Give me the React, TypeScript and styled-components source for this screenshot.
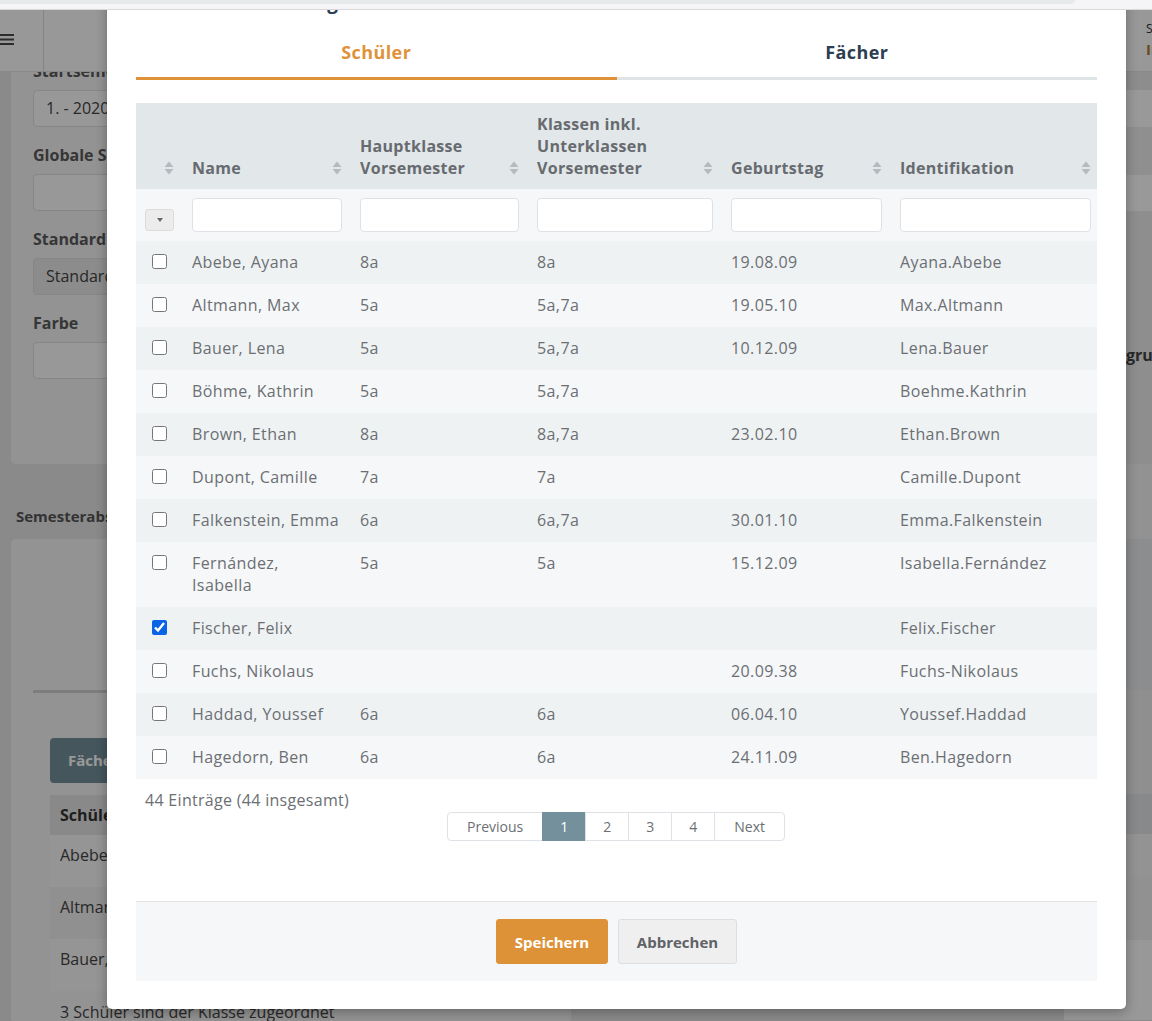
import React from 'react';
import styled, { createGlobalStyle } from 'styled-components';

const colors = {
  orange: '#dd9238',
  navy: '#2c3e50',
  text: '#6b6f74',
  head: '#676b70',
  headBg: '#e2e7e9',
  filterBg: '#f6f7f8',
  rowOdd: '#eff2f3',
  rowEven: '#f6f7f8',
  border: '#dee2e6',
  slate: '#74909c',
};

const font = `'Open Sans', 'Liberation Sans', sans-serif`;

const GlobalStyle = createGlobalStyle`
  html, body {
    margin: 0;
    padding: 0;
  }
  body {
    font-family: ${font};
    background: #e6e6e6;
    overflow: hidden;
  }
  * {
    box-sizing: border-box;
  }
`;

interface Student {
  name: string;
  main: string;
  classes: string;
  birthday: string;
  ident: string;
  checked?: boolean;
}

const students: Student[] = [
  { name: 'Abebe, Ayana', main: '8a', classes: '8a', birthday: '19.08.09', ident: 'Ayana.Abebe' },
  { name: 'Altmann, Max', main: '5a', classes: '5a,7a', birthday: '19.05.10', ident: 'Max.Altmann' },
  { name: 'Bauer, Lena', main: '5a', classes: '5a,7a', birthday: '10.12.09', ident: 'Lena.Bauer' },
  { name: 'Böhme, Kathrin', main: '5a', classes: '5a,7a', birthday: '', ident: 'Boehme.Kathrin' },
  { name: 'Brown, Ethan', main: '8a', classes: '8a,7a', birthday: '23.02.10', ident: 'Ethan.Brown' },
  { name: 'Dupont, Camille', main: '7a', classes: '7a', birthday: '', ident: 'Camille.Dupont' },
  { name: 'Falkenstein, Emma', main: '6a', classes: '6a,7a', birthday: '30.01.10', ident: 'Emma.Falkenstein' },
  { name: 'Fernández,\nIsabella', main: '5a', classes: '5a', birthday: '15.12.09', ident: 'Isabella.Fernández' },
  { name: 'Fischer, Felix', main: '', classes: '', birthday: '', ident: 'Felix.Fischer', checked: true },
  { name: 'Fuchs, Nikolaus', main: '', classes: '', birthday: '20.09.38', ident: 'Fuchs-Nikolaus' },
  { name: 'Haddad, Youssef', main: '6a', classes: '6a', birthday: '06.04.10', ident: 'Youssef.Haddad' },
  { name: 'Hagedorn, Ben', main: '6a', classes: '6a', birthday: '24.11.09', ident: 'Ben.Hagedorn' },
];

const columns: { width: number; label: string[] }[] = [
  { width: 44, label: [] },
  { width: 168, label: ['Name'] },
  { width: 177, label: ['Hauptklasse', 'Vorsemester'] },
  { width: 194, label: ['Klassen inkl.', 'Unterklassen', 'Vorsemester'] },
  { width: 169, label: ['Geburtstag'] },
  { width: 209, label: ['Identifikation'] },
];

const SortIcon = () => (
  <svg width="10" height="14" viewBox="0 0 10 14">
    <path d="M0.5 6 L5 0.5 L9.5 6 Z" fill="#b6babe" />
    <path d="M0.5 8 L5 13.5 L9.5 8 Z" fill="#b6babe" />
  </svg>
);

const MenuIcon = () => (
  <svg width="14" height="11" viewBox="0 0 14 11">
    <rect x="0" y="0" width="14" height="2" fill="#4a4a4a" />
    <rect x="0" y="4.5" width="14" height="2" fill="#4a4a4a" />
    <rect x="0" y="9" width="14" height="2" fill="#4a4a4a" />
  </svg>
);

export default function App() {
  return (
    <Screen>
      <GlobalStyle />
      <TopStrip>
        <TopStripBar />
      </TopStrip>
      <Stage>
        <Navbar>
          <NavToggle>
            <MenuIcon />
          </NavToggle>
          <NavUser>
            <NavUserSmall>Schule</NavUserSmall>
            <NavUserName>Info</NavUserName>
          </NavUser>
        </Navbar>
        <BgContent>
          <BgMain>
            <FormCard>
              <FieldLabel>Startsemester</FieldLabel>
              <FieldBox>1. - 2020</FieldBox>
              <FieldLabel>Globale Sichtbarkeit</FieldLabel>
              <FieldBox />
              <FieldLabel>Standardraum</FieldLabel>
              <FieldBox $muted>Standardraum</FieldBox>
              <FieldLabel>Farbe</FieldLabel>
              <FieldBox />
            </FormCard>
            <SectionTitle>Semesterabschluss</SectionTitle>
            <ListCard>
              <CardRule />
              <ListInner>
                <SlateButton>Fächer zuordnen</SlateButton>
                <BgTable>
                  <BgHeadRow>Schüler</BgHeadRow>
                  <BgRow>Abebe, Ayana</BgRow>
                  <BgRow $alt>Altmann, Max</BgRow>
                  <BgRow>Bauer, Lena</BgRow>
                </BgTable>
                <BgNote>3 Schüler sind der Klasse zugeordnet</BgNote>
              </ListInner>
            </ListCard>
          </BgMain>
          <BgSide>
            <SideBand $h={18} $bg="#ececec" />
            <SideBand $h={37} $bg="#ffffff" />
            <SideBand $h={48} $bg="#eeeeee" />
            <SideBand $h={36} $bg="#ffffff" />
            <SideGroup>
              <SideLabel>Klassengruppen</SideLabel>
            </SideGroup>
            <SideBand $h={75} $bg="#f4f4f4" />
            <SideBand $h={151} $bg="#eaeced" />
            <SideBand $h={104} $bg="#eeeff0" />
            <SideBand $h={40} $bg="#e1e5e7" />
            <SideBand $h={42} $bg="#f6f6f6" />
            <SideBand $h={64} $bg="#f2f2f2" />
            <SideBand $h={80} $bg="#fdfdfd" />
          </BgSide>
        </BgContent>
        <Backdrop />
        <Modal>
          <ModalTitle>Klassenzuordnung</ModalTitle>
          <Tabs>
            <Tab $active>Schüler</Tab>
            <Tab>Fächer</Tab>
          </Tabs>
          <Table>
            <colgroup>
              {columns.map((c, i) => (
                <col key={i} style={{ width: c.width }} />
              ))}
            </colgroup>
            <thead>
              <tr>
                {columns.map((c, i) => (
                  <HeadCell key={i}>
                    <HeadInner>
                      <span>
                        {c.label.map((l, j) => (
                          <HeadLine key={j}>{l}</HeadLine>
                        ))}
                      </span>
                      <SortWrap>
                        <SortIcon />
                      </SortWrap>
                    </HeadInner>
                  </HeadCell>
                ))}
              </tr>
              <tr>
                <FilterCell $first>
                  <FilterToggle>
                    <Caret />
                  </FilterToggle>
                </FilterCell>
                {columns.slice(1).map((_, i) => (
                  <FilterCell key={i}>
                    <FilterInput />
                  </FilterCell>
                ))}
              </tr>
            </thead>
            <tbody>
              {students.map((s, i) => (
                <BodyRow key={s.ident} $odd={i % 2 === 0}>
                  <CheckCell>
                    <Check type="checkbox" defaultChecked={s.checked} />
                  </CheckCell>
                  <Cell>{s.name}</Cell>
                  <Cell>{s.main}</Cell>
                  <Cell>{s.classes}</Cell>
                  <Cell>{s.birthday}</Cell>
                  <Cell>{s.ident}</Cell>
                </BodyRow>
              ))}
            </tbody>
          </Table>
          <TableInfo>44 Einträge (44 insgesamt)</TableInfo>
          <Pagination>
            <PageItem $wide>Previous</PageItem>
            <PageItem $num $active>1</PageItem>
            <PageItem $num>2</PageItem>
            <PageItem $num>3</PageItem>
            <PageItem $num>4</PageItem>
            <PageItem $wide>Next</PageItem>
          </Pagination>
          <ModalFooter>
            <PrimaryButton>Speichern</PrimaryButton>
            <SecondaryButton>Abbrechen</SecondaryButton>
          </ModalFooter>
        </Modal>
      </Stage>
    </Screen>
  );
}

/* ---------- page frame ---------- */

const Screen = styled('div')`
  width: 1152px;
  height: 1021px;
  overflow: hidden;
`;

const TopStrip = styled('div')`
  height: 10px;
  background: #f5f5f7;
  border-bottom: 1px solid #d9d9db;
`;

const TopStripBar = styled('div')`
  width: 1075px;
  height: 4px;
  background: #e8e9eb;
  border-bottom-right-radius: 4px;
`;

const Stage = styled('div')`
  position: relative;
  height: 1011px;
  overflow: hidden;
  background: #e6e6e6;
`;

/* ---------- background page (behind the backdrop) ---------- */

const Navbar = styled('header')`
  position: absolute;
  top: 0;
  left: 0;
  right: 0;
  z-index: 1;
  height: 62px;
  display: flex;
  align-items: stretch;
  background: #fdfdfd;
  border-bottom: 1px solid #e3e3e3;
`;

const NavToggle = styled('div')`
  width: 44px;
  display: flex;
  align-items: center;
  border-right: 1px solid #dcdcdc;
  padding-bottom: 2px;
`;

const NavUser = styled('div')`
  margin-left: auto;
  width: 6px;
  padding-top: 11px;
  white-space: nowrap;
`;

const NavUserSmall = styled('div')`
  font-size: 12px;
  line-height: 16px;
  color: #333;
`;

const NavUserName = styled('div')`
  font-size: 15px;
  font-weight: 700;
  line-height: 24px;
  color: #b07a3a;
`;

const BgContent = styled('div')`
  display: flex;
  padding-left: 11px;
`;

const BgMain = styled('div')`
  width: 560px;
  flex: none;
`;

const FormCard = styled('section')`
  margin-top: 30px;
  background: #f5f5f5;
  border-radius: 5px;
  padding: 20px 22px 85px;
`;

const FieldLabel = styled('div')`
  font-size: 16px;
  line-height: 22px;
  font-weight: 700;
  color: #5a5a5a;
  margin-bottom: 8px;
`;

const FieldBox = styled('div')<{ $muted?: boolean }>`
  height: 37px;
  margin-bottom: 17px;
  border: 1px solid #e0e0e0;
  border-radius: 4px;
  background: ${(p) => (p.$muted ? '#e9e9e9' : '#fefefe')};
  padding: 0 12px;
  font-size: 16px;
  line-height: 35px;
  color: #444;
  &:last-child {
    margin-bottom: 0;
  }
`;

const SectionTitle = styled('h3')`
  margin: 41px 0 12px 5px;
  font-size: 15px;
  line-height: 22px;
  font-weight: 700;
  color: #555;
`;

const ListCard = styled('section')`
  background: #f5f5f5;
  border-radius: 5px;
  padding: 151px 22px 0;
`;

const CardRule = styled('div')`
  height: 3px;
  background: #d0d0d0;
`;

const ListInner = styled('div')`
  padding: 45px 0 0 17px;
`;

const SlateButton = styled('div')`
  display: inline-block;
  height: 45px;
  padding: 0 18px;
  border-radius: 4px;
  background: ${colors.slate};
  color: #fff;
  font-weight: 700;
  font-size: 15px;
  line-height: 45px;
`;

const BgTable = styled('div')`
  margin-top: 12px;
`;

const BgHeadRow = styled('div')`
  height: 40px;
  padding: 0 10px;
  background: #e5e5e5;
  font-weight: 700;
  font-size: 16px;
  line-height: 40px;
  color: #333;
`;

const BgRow = styled('div')<{ $alt?: boolean }>`
  height: 52px;
  padding: 9px 10px 0;
  background: ${(p) => (p.$alt ? '#f0f0f0' : '#f8f8f8')};
  font-size: 16px;
  line-height: 22px;
  color: #444;
`;

const BgNote = styled('p')`
  margin: 10px 0 0 10px;
  font-size: 16px;
  line-height: 22px;
  color: #444;
`;

const BgSide = styled('aside')`
  margin-left: auto;
  width: 88px;
  padding-top: 62px;
  display: flex;
  flex-direction: column;
`;

const SideBand = styled('div')<{ $h: number; $bg: string }>`
  height: ${(p) => p.$h}px;
  background: ${(p) => p.$bg};
`;

const SideGroup = styled('div')`
  height: 253px;
  background: #ededed;
  padding: 133px 0 0 1px;
`;

const SideLabel = styled('div')`
  font-size: 16px;
  font-weight: 700;
  line-height: 22px;
  color: #444;
  white-space: nowrap;
`;

const Backdrop = styled('div')`
  position: absolute;
  inset: 0;
  z-index: 2;
  background: rgba(0, 0, 0, 0.4);
`;

/* ---------- modal ---------- */

const Modal = styled('div')`
  position: absolute;
  z-index: 3;
  top: -41px;
  left: 107px;
  width: 1019px;
  padding: 20px 29px 28px;
  background: #fff;
  border-radius: 5px;
  box-shadow: 0 3px 12px rgba(0, 0, 0, 0.3);
`;

const ModalTitle = styled('h2')`
  margin: 0;
  font-size: 19px;
  line-height: 27px;
  font-weight: 700;
  color: ${colors.navy};
  padding-left: 27px;
`;

const Tabs = styled('nav')`
  display: flex;
`;

const Tab = styled('div')<{ $active?: boolean }>`
  flex: 1;
  text-align: center;
  padding: 23px 0 12px;
  font-size: 18px;
  letter-spacing: 0.4px;
  line-height: 26px;
  font-weight: 700;
  color: ${(p) => (p.$active ? '#e0923a' : colors.navy)};
  border-bottom: 3px solid ${(p) => (p.$active ? '#de9136' : '#dfe4e6')};
`;

const Table = styled('table')`
  margin-top: 23px;
  width: 961px;
  table-layout: fixed;
  border-collapse: collapse;
`;

const HeadCell = styled('th')`
  background: ${colors.headBg};
  padding: 10px 6px 10px 12px;
  vertical-align: bottom;
  text-align: left;
`;

const HeadInner = styled('div')`
  display: flex;
  align-items: flex-end;
  justify-content: space-between;
`;

const HeadLine = styled('div')`
  font-size: 16px;
  letter-spacing: 0.3px;
  line-height: 22px;
  font-weight: 700;
  color: ${colors.head};
  white-space: nowrap;
`;

const SortWrap = styled('span')`
  display: flex;
  height: 22px;
  align-items: center;
`;

const FilterCell = styled('td')<{ $first?: boolean }>`
  background: ${colors.filterBg};
  padding: ${(p) => (p.$first ? '9px 0 10px 9px' : '9px 6px 9px 12px')};
  vertical-align: bottom;
`;

const FilterToggle = styled('div')`
  width: 29px;
  height: 22px;
  display: flex;
  align-items: center;
  justify-content: center;
  background: #ececec;
  border: 1px solid #dcdcdc;
  border-radius: 3px;
`;

const Caret = styled('span')`
  width: 0;
  height: 0;
  border-left: 3.5px solid transparent;
  border-right: 3.5px solid transparent;
  border-top: 4px solid #666;
`;

const FilterInput = styled('input')`
  display: block;
  width: 100%;
  height: 34px;
  border: 1px solid ${colors.border};
  border-radius: 4px;
  background: #fff;
  outline: none;
`;

const BodyRow = styled('tr')<{ $odd: boolean }>`
  background: ${(p) => (p.$odd ? colors.rowOdd : colors.rowEven)};
`;

const Cell = styled('td')`
  padding: 10px 4px 11px 12px;
  vertical-align: top;
  font-size: 16px;
  letter-spacing: 0.4px;
  line-height: 22px;
  color: ${colors.text};
  white-space: pre-line;
`;

const CheckCell = styled('td')`
  padding: 10px 0 11px 16px;
  vertical-align: top;
`;

const Check = styled('input')`
  display: block;
  width: 15px;
  height: 15px;
  margin: 3px 0 0;
  accent-color: #0b63e5;
`;

const TableInfo = styled('div')`
  padding: 10px 9px 0;
  font-size: 16px;
  letter-spacing: 0.3px;
  line-height: 22px;
  color: ${colors.text};
`;

const Pagination = styled('div')`
  display: flex;
  justify-content: center;
  margin: 1px 0 60px;
`;

const PageItem = styled('div')<{ $num?: boolean; $active?: boolean; $wide?: boolean }>`
  height: 29px;
  min-width: ${(p) => (p.$num ? '44px' : 'auto')};
  padding: 0 ${(p) => (p.$wide ? '19px' : '16px')};
  display: flex;
  align-items: center;
  justify-content: center;
  font-size: 14px;
  color: ${(p) => (p.$active ? '#fff' : colors.text)};
  background: ${(p) => (p.$active ? colors.slate : '#fff')};
  border: 1px solid ${(p) => (p.$active ? colors.slate : colors.border)};
  margin-left: -1px;
  &:first-child {
    border-radius: 4px 0 0 4px;
  }
  &:last-child {
    border-radius: 0 4px 4px 0;
  }
`;

const ModalFooter = styled('footer')`
  display: flex;
  justify-content: center;
  gap: 10px;
  padding: 17px 0;
  background: ${colors.filterBg};
  border-top: 1px solid #e1e3e5;
`;

const PrimaryButton = styled('button')`
  height: 45px;
  width: 112px;
  padding: 0;
  border: 1px solid ${colors.orange};
  border-radius: 3px;
  background: ${colors.orange};
  color: #fff;
  font-family: ${font};
  font-size: 15px;
  font-weight: 700;
`;

const SecondaryButton = styled('button')`
  height: 45px;
  width: 119px;
  padding: 0;
  border: 1px solid #dedede;
  border-radius: 3px;
  background: #efefef;
  color: #5f6266;
  font-family: ${font};
  font-size: 15px;
  font-weight: 700;
`;
